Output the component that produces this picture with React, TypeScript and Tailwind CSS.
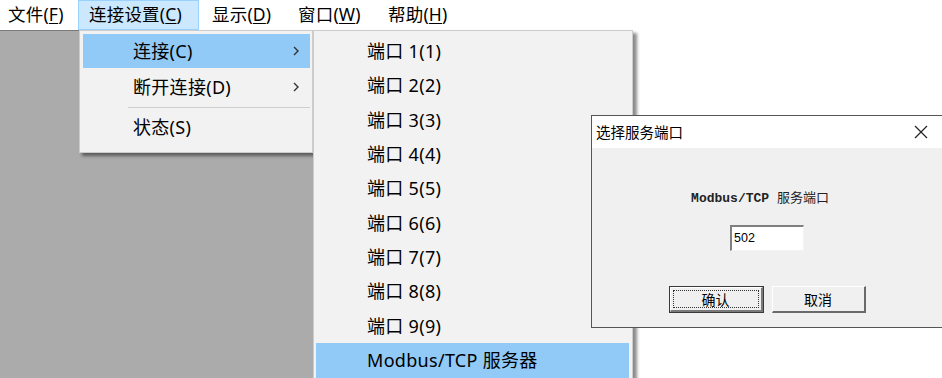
import React from "react";

const ui = { fontFamily: '"Noto Sans", "Noto Sans CJK SC", sans-serif' };
const cjk = { fontFamily: '"Noto Sans CJK SC", "Noto Sans", sans-serif' };
const dlg = { fontFamily: '"Liberation Sans", "Noto Sans CJK SC", sans-serif' };
const mono = { fontFamily: '"Liberation Mono", "Noto Sans CJK SC", monospace' };

function Chevron() {
  return (
    <svg width="8" height="12" viewBox="0 0 8 12" className="block">
      <polyline points="2,2 6,6 2,10" fill="none" stroke="#333" strokeWidth="1.4" />
    </svg>
  );
}

function BarItem({ label, k, w, pl, active }: { label: string; k: string; w: string; pl: string; active?: boolean }) {
  return (
    <div
      className={`h-full flex items-center ${w} ${pl} ${
        active ? "bg-[#cce8ff] border border-[#99d1ff]" : "border border-transparent"
      }`}
    >
      <span>
        {label}(<span className="underline underline-offset-2">{k}</span>)
      </span>
    </div>
  );
}

export default function App() {
  const ports = [1, 2, 3, 4, 5, 6, 7, 8, 9];
  return (
    <div className="relative w-[942px] h-[378px] overflow-hidden bg-white text-black" style={ui}>
      {/* menu bar */}
      <div className="flex h-[30px] bg-white text-[17.5px] leading-none tracking-[0.2px]">
        <BarItem label="文件" k="F" w="w-[78px]" pl="pl-[7px]" />
        <BarItem label="连接设置" k="C" w="w-[121px]" pl="pl-[10px]" active />
        <BarItem label="显示" k="D" w="w-[87px]" pl="pl-[12px]" />
        <BarItem label="窗口" k="W" w="w-[90px]" pl="pl-[11px]" />
        <BarItem label="帮助" k="H" w="w-[90px]" pl="pl-[11px]" />
      </div>
      {/* client area */}
      <div className="flex h-[348px]">
        <div className="w-[320px] h-full bg-[#ababab] border-t border-[#7a7a7a]" />
        <div className="flex-1 h-full bg-white" />
      </div>

      {/* dropdown 1 */}
      <div className="absolute left-[79px] top-[30px] w-[234px] h-[123px] bg-[#f2f2f2] border border-[#cccccc] shadow-[3px_3px_3px_rgba(0,0,0,0.45)] pt-[3px] pl-[3px] pr-[2px] text-[18px] leading-none tracking-[0.3px]">
        <div className="h-[34px] bg-[#91c9f7] flex items-center pl-[50px] pr-[10px] justify-between">
          <span>连接(C)</span>
          <Chevron />
        </div>
        <div className="h-[36px] flex items-center pl-[50px] pr-[10px] justify-between pt-[2px]">
          <span>断开连接(D)</span>
          <Chevron />
        </div>
        <div className="h-[1px] bg-[#cfcfcf] ml-[45px] mt-[3px]" />
        <div className="h-[40px] flex items-center pl-[50px] pb-[3px]">
          <span>状态(S)</span>
        </div>
      </div>

      {/* submenu */}
      <div className="absolute left-[313px] top-[30px] w-[320px] h-[360px] bg-[#f2f2f2] border border-[#cccccc] shadow-[4px_3px_3px_rgba(0,0,0,0.45)] pt-[3px] pl-[2px] pr-[3px] text-[18px] leading-none tracking-[0.3px]">
        {ports.map((n) => (
          <div key={n} className="h-[34.33px] flex items-center pl-[51px]">
            <span>端口&nbsp;{n}({n})</span>
          </div>
        ))}
        <div className="h-[35px] bg-[#91c9f7] flex items-center pl-[51px]">
          <span>Modbus/TCP 服务器</span>
        </div>
      </div>

      {/* dialog */}
      <div className="absolute left-[591px] top-[115px] w-[352px] h-[213px] border border-[#555555] bg-[#f0f0f0] flex flex-col" style={dlg}>
        <div className="h-[32px] bg-white flex items-center justify-between pl-[4px] pr-[14px]">
          <span className="text-[14.5px] text-black" style={cjk}>选择服务端口</span>
          <svg width="14" height="14" viewBox="0 0 14 14">
            <path d="M1 1 L13 13 M13 1 L1 13" stroke="#222" strokeWidth="1.2" fill="none" />
          </svg>
        </div>
        <div className="flex-1 flex flex-col items-center pt-[43px]">
          <div className="text-[13px] leading-[16px] pr-[14px] font-bold text-[#222]" style={mono}>
            Modbus/TCP <span className="font-normal">服务端口</span>
          </div>
          <div className="mt-[18px] w-[74px] h-[26px] bg-white border-t-2 border-l-2 border-t-[#808080] border-l-[#808080] border-b border-r border-b-[#f4f4f4] border-r-[#f4f4f4] flex items-center pl-[2px] text-[12.5px]">
            502
          </div>
          <div className="mt-[35px] flex gap-[8px]">
            <div className="w-[95px] h-[27px] border border-[#3a3a3a] flex">
              <div className="flex-1 border-t border-l border-t-white border-l-white border-b-2 border-r-2 border-b-[#7a7a7a] border-r-[#7a7a7a] p-[2px] flex">
                <div className="flex-1 border border-dotted border-[#333] flex items-center justify-center text-[14px] leading-none" style={cjk}>
                  确认
                </div>
              </div>
            </div>
            <div className="w-[94px] h-[27px] border-t border-l border-t-white border-l-white border-b-2 border-r-2 border-b-[#6a6a6a] border-r-[#6a6a6a] flex items-center justify-center text-[14px] leading-none" style={cjk}>
              取消
            </div>
          </div>
        </div>
      </div>
    </div>
  );
}
